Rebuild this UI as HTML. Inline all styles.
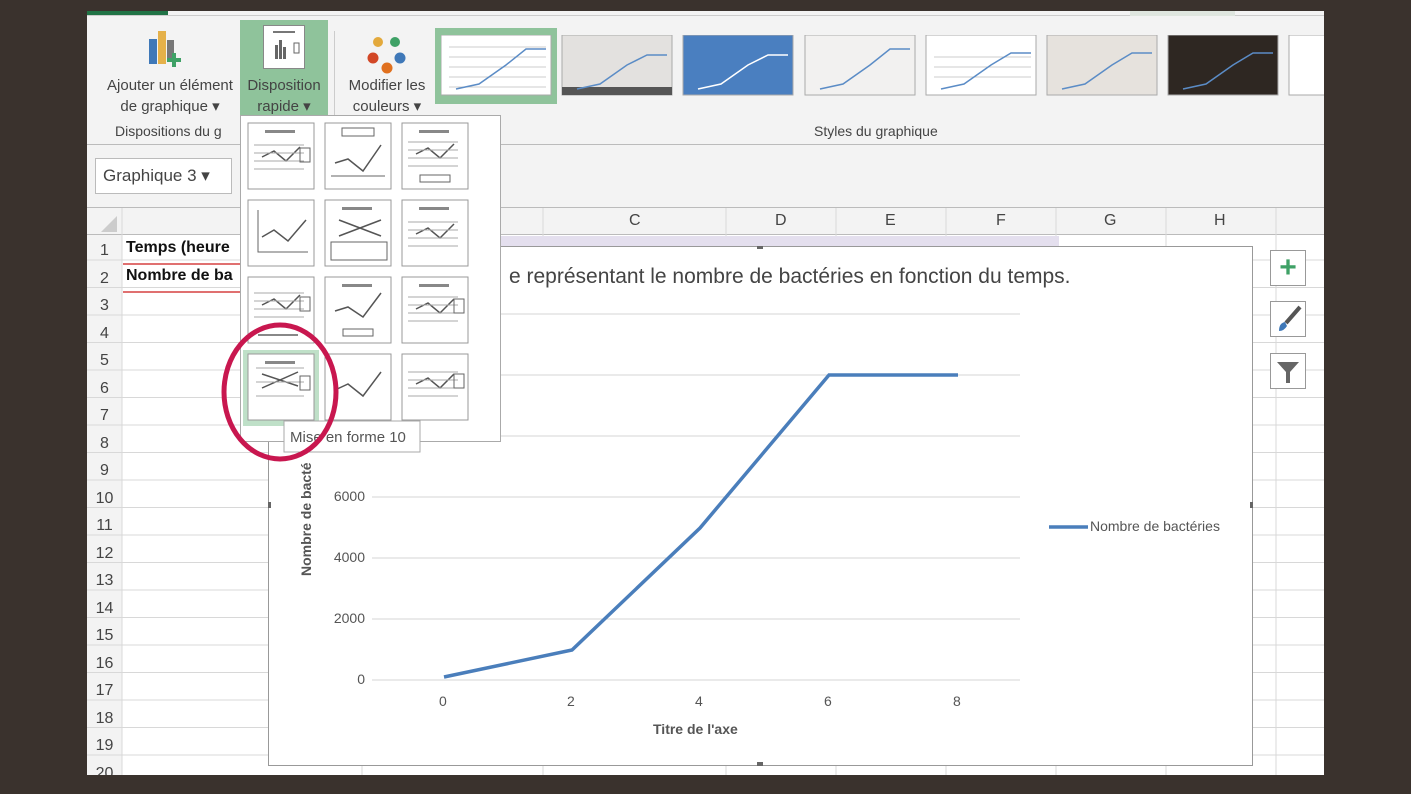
<!DOCTYPE html>
<html><head><meta charset="utf-8"><style>
*{margin:0;padding:0;box-sizing:border-box}
body{width:1411px;height:794px;background:#3a322d;position:relative;overflow:hidden;font-family:"Liberation Sans",sans-serif;color:#333}
.a{position:absolute}
.t{font-size:15px;color:#444;white-space:nowrap}
.yl{position:absolute;left:230px;width:48px;text-align:right;font-size:14px;color:#555}
</style></head><body>
<div class="a" style="left:87px;top:11px;width:1237px;height:764px;background:#f3f3f3;overflow:hidden">
 <div class="a" style="left:0;top:0;width:81px;height:4px;background:#217346"></div>
 <div class="a" style="left:0;top:4px;width:1237px;height:1px;background:#ccc"></div>
 <div class="a" style="left:1043px;top:0;width:105px;height:5px;background:#dfe6df"></div>
 <svg class="a" style="left:58px;top:16px" width="50" height="46"><rect x="4" y="12" width="8" height="25" fill="#3f78b8"/><rect x="13" y="4" width="8" height="33" fill="#e5b14a"/><rect x="22" y="13" width="7" height="20" fill="#777"/><rect x="27" y="26" width="4" height="14" fill="#3fa166"/><rect x="22" y="31" width="14" height="4" fill="#3fa166"/></svg>
 <div class="a t" style="left:8px;top:64px;width:150px;text-align:center;line-height:21px">Ajouter un élément<br>de graphique ▾</div>
 <div class="a" style="left:153px;top:9px;width:88px;height:105px;background:#8fc39b"></div>
 <div class="a" style="left:176px;top:14px;width:42px;height:44px;background:#fff;border:1px solid #888"></div>
 <svg class="a" style="left:176px;top:14px" width="42" height="44"><rect x="10" y="6" width="22" height="2" fill="#777"/><rect x="12" y="20" width="3" height="14" fill="#666"/><rect x="16" y="15" width="3" height="19" fill="#666"/><rect x="20" y="22" width="3" height="12" fill="#666"/><rect x="31" y="18" width="5" height="10" fill="none" stroke="#666"/></svg>
 <div class="a t" style="left:153px;top:64px;width:88px;text-align:center;line-height:21px">Disposition<br>rapide ▾</div>
 <div class="a" style="left:247px;top:20px;width:1px;height:90px;background:#ccc"></div>
 <svg class="a" style="left:275px;top:16px" width="50" height="50"><circle cx="16" cy="15" r="5" fill="#e3a93c"/><circle cx="33" cy="15" r="5" fill="#3fa166"/><circle cx="11" cy="31" r="5.5" fill="#d24726"/><circle cx="38" cy="31" r="5.5" fill="#3f78b8"/><circle cx="25" cy="41" r="5.5" fill="#e0701e"/></svg>
 <div class="a t" style="left:250px;top:64px;width:100px;text-align:center;line-height:21px">Modifier les<br>couleurs ▾</div>
 <div class="a t" style="left:28px;top:112px;font-size:14px">Dispositions du g</div>
 <div class="a t" style="left:727px;top:112px;font-size:14px">Styles du graphique</div>
 <div class="a" style="left:0;top:133px;width:1237px;height:1px;background:#bbb"></div>
 <div class="a" style="left:348px;top:17px;width:122px;height:76px;background:#8fc39b"></div>
 <svg class="a" style="left:354px;top:24px" width="940" height="64">
  <g><rect width="110" height="60" fill="#fff" stroke="#aaa"/><path d="M8 12H105M8 22H105M8 32H105M8 42H105M8 52H105" stroke="#ccc"/><path d="M15 54L38 49L65 30L85 14H105" stroke="#5b8cc6" stroke-width="1.5" fill="none"/></g>
  <g transform="translate(121,0)"><rect width="110" height="60" fill="#e3e1df" stroke="#aaa"/><rect y="52" width="110" height="8" fill="#555"/><path d="M15 54L38 49L65 30L85 20H105" stroke="#5b8cc6" stroke-width="1.5" fill="none"/></g>
  <g transform="translate(242,0)"><rect width="110" height="60" fill="#4a7fc0" stroke="#aaa"/><path d="M15 54L38 49L65 30L85 20H105" stroke="#fff" stroke-width="1.5" fill="none"/></g>
  <g transform="translate(364,0)"><rect width="110" height="60" fill="#f2f1f0" stroke="#aaa"/><path d="M15 54L38 49L65 30L85 14H105" stroke="#5b8cc6" stroke-width="1.5" fill="none"/></g>
  <g transform="translate(485,0)"><rect width="110" height="60" fill="#fff" stroke="#aaa"/><path d="M8 22H105M8 32H105M8 42H105" stroke="#ccc"/><path d="M15 54L38 49L65 30L85 18H105" stroke="#5b8cc6" stroke-width="1.5" fill="none"/></g>
  <g transform="translate(606,0)"><rect width="110" height="60" fill="#e6e2dd" stroke="#aaa"/><path d="M15 54L38 49L65 30L85 18H105" stroke="#5b8cc6" stroke-width="1.5" fill="none"/></g>
  <g transform="translate(727,0)"><rect width="110" height="60" fill="#2e2722" stroke="#aaa"/><path d="M15 54L38 49L65 30L85 18H105" stroke="#5b8cc6" stroke-width="1.5" fill="none"/></g>
  <g transform="translate(848,0)"><rect width="110" height="60" fill="#fff" stroke="#aaa"/></g>
 </svg>
 <div class="a" style="left:8px;top:147px;width:137px;height:36px;background:#fff;border:1px solid #bbb"></div>
 <div class="a t" style="left:16px;top:155px;font-size:17px">Graphique 3 ▾</div>
 <div class="a" style="left:0;top:196px;width:1237px;height:1px;background:#bbb"></div>
 <div class="a" style="left:0;top:197px;width:1237px;height:567px;background:#fff"></div>
 <div class="a" style="left:0;top:197px;width:35px;height:567px;background:#f3f3f3"></div>
 <div class="a" style="left:0;top:197px;width:1237px;height:27px;background:#f3f3f3;border-bottom:1px solid #bbb"></div>
 <svg class="a" style="left:0;top:197px" width="1237" height="567">
  <g stroke="#d8d8d8">
   <path d="M35 0V567M275 0V567M456 0V567M639 0V567M749 0V567M859 0V567M969 0V567M1079 0V567M1189 0V567"/>
   <path d="M0 52H1237M0 79.5H1237M0 107H1237M0 134.5H1237M0 162H1237M0 189.5H1237M0 217H1237M0 244.5H1237M0 272H1237M0 299.5H1237M0 327H1237M0 354.5H1237M0 382H1237M0 409.5H1237M0 437H1237M0 464.5H1237M0 492H1237M0 519.5H1237M0 547H1237"/>
  </g>
  <path d="M30 8L30 24L14 24Z" fill="#ccc"/>
  <rect x="400" y="28" width="572" height="10" fill="#e4dfee"/>
 </svg>
 <div class="a" style="left:0;top:197px;width:1237px;height:27px;font-size:16px;color:#444">
  <span class="a" style="left:542px;top:4px">C</span><span class="a" style="left:688px;top:4px">D</span><span class="a" style="left:798px;top:4px">E</span><span class="a" style="left:909px;top:4px">F</span><span class="a" style="left:1017px;top:4px">G</span><span class="a" style="left:1127px;top:4px">H</span>
 </div>
 <div class="a" style="left:0;top:226px;width:35px;font-size:16px;color:#444;line-height:27.5px;text-align:center">1<br>2<br>3<br>4<br>5<br>6<br>7<br>8<br>9<br>10<br>11<br>12<br>13<br>14<br>15<br>16<br>17<br>18<br>19<br>20</div>
 <div class="a" style="left:39px;top:228px;font-size:16px;font-weight:bold;color:#111">Temps (heure</div>
 <div class="a" style="left:39px;top:256px;font-size:16px;font-weight:bold;color:#111">Nombre de ba</div>
 <div class="a" style="left:36px;top:252px;width:120px;height:2px;background:#e07070"></div>
 <div class="a" style="left:36px;top:280px;width:120px;height:2px;background:#e07070"></div>
 <div class="a" style="left:181px;top:235px;width:985px;height:520px;background:#fff;border:1px solid #999"></div>
 <svg class="a" style="left:181px;top:235px" width="985" height="520">
  <g stroke="#d4d4d4"><path d="M104 434H752M104 373H752M104 312H752M104 251H752M104 190H752M104 129H752M104 68H752"/></g>
  <path d="M176 431L304 404L432 282L561 129H690" stroke="#4a7ebb" stroke-width="3.5" fill="none"/>
  <path d="M781 281H820" stroke="#4a7ebb" stroke-width="3.5"/>
  <g fill="#666"><rect x="-3" y="256" width="6" height="6"/><rect x="982" y="256" width="6" height="6"/><rect x="489" y="-3" width="6" height="6"/><rect x="489" y="516" width="6" height="6"/></g>
 </svg>
 <div class="a" style="left:422px;top:254px;font-size:21px;color:#444;white-space:nowrap">e représentant le nombre de bactéries en fonction du temps.</div>
 <div class="yl" style="top:477px">6000</div>
 <div class="yl" style="top:538px">4000</div>
 <div class="yl" style="top:599px">2000</div>
 <div class="yl" style="top:660px">0</div>
 <div class="a" style="left:352px;top:682px;font-size:14px;color:#555"><span class="a" style="left:0">0</span><span class="a" style="left:128px">2</span><span class="a" style="left:256px">4</span><span class="a" style="left:385px">6</span><span class="a" style="left:514px">8</span></div>
 <div class="a" style="left:566px;top:710px;font-size:14px;color:#555;font-weight:bold;white-space:nowrap">Titre de l'axe</div>
 <div class="a" style="left:211px;top:565px;font-size:14px;color:#555;font-weight:bold;transform:rotate(-90deg);transform-origin:0 0;white-space:nowrap">Nombre de bacté</div>
 <div class="a" style="left:1003px;top:507px;font-size:14px;color:#555;white-space:nowrap">Nombre de bactéries</div>
 <div class="a" style="left:1183px;top:239px;width:36px;height:36px;background:#fff;border:1px solid #999;color:#3fa166;font-size:30px;font-weight:bold;text-align:center;line-height:34px">+</div>
 <div class="a" style="left:1183px;top:290px;width:36px;height:36px;background:#fff;border:1px solid #999"><svg width="34" height="34"><path d="M29 5L15 21" stroke="#555" stroke-width="4"/><path d="M8 29Q8 21 14 20L16 24Q13 29 8 29Z" fill="#3f78b8"/></svg></div>
 <div class="a" style="left:1183px;top:342px;width:36px;height:36px;background:#fff;border:1px solid #999"><svg width="34" height="34"><path d="M6 8H28L19 18V29H15V18Z" fill="#666"/></svg></div>
</div>
<div class="a" style="left:240px;top:115px;width:261px;height:327px;background:#fff;border:1px solid #aaa"></div>
<div class="a" style="left:243px;top:350px;width:76px;height:76px;background:#bfe0c8"></div>
<svg class="a" style="left:0;top:0" width="1411" height="794">
 <defs><g id="c"><path d="M14 16L26 10L38 20L52 6" stroke="#555" stroke-width="1.5" fill="none"/><path d="M6 4H56M6 12H56M6 20H56M6 28H56" stroke="#aaa"/></g></defs>
 <g fill="none">
 <g transform="translate(248,123)"><rect width="66" height="66" fill="#fff" stroke="#999"/><rect x="17" y="7" width="30" height="3" fill="#888"/><use href="#c" x="0" y="18"/><rect x="52" y="25" width="10" height="14" stroke="#666"/></g>
 <g transform="translate(325,123)"><rect width="66" height="66" fill="#fff" stroke="#999"/><rect x="17" y="5" width="32" height="8" stroke="#666"/><path d="M10 40L23 36L38 48L56 22" stroke="#555" stroke-width="1.5"/><path d="M6 53H60" stroke="#666"/></g>
 <g transform="translate(402,123)"><rect width="66" height="66" fill="#fff" stroke="#999"/><rect x="17" y="7" width="30" height="3" fill="#888"/><use href="#c" x="0" y="15"/><rect x="18" y="52" width="30" height="7" stroke="#666"/></g>
 <g transform="translate(248,200)"><rect width="66" height="66" fill="#fff" stroke="#999"/><path d="M10 10V52H60" stroke="#666"/><path d="M14 37L26 30L40 41L58 20" stroke="#555" stroke-width="1.5"/></g>
 <g transform="translate(325,200)"><rect width="66" height="66" fill="#fff" stroke="#999"/><rect x="17" y="7" width="30" height="3" fill="#888"/><path d="M14 20L56 36M14 36L56 20" stroke="#555" stroke-width="1.5"/><rect x="6" y="42" width="56" height="18" stroke="#666"/></g>
 <g transform="translate(402,200)"><rect width="66" height="66" fill="#fff" stroke="#999"/><rect x="17" y="7" width="30" height="3" fill="#888"/><use href="#c" x="0" y="18"/></g>
 <g transform="translate(248,277)"><rect width="66" height="66" fill="#fff" stroke="#999"/><use href="#c" x="0" y="12"/><rect x="52" y="20" width="10" height="14" stroke="#666"/><rect x="10" y="57" width="40" height="2" fill="#888"/></g>
 <g transform="translate(325,277)"><rect width="66" height="66" fill="#fff" stroke="#999"/><rect x="17" y="7" width="30" height="3" fill="#888"/><path d="M10 34L23 30L38 40L56 16" stroke="#555" stroke-width="1.5"/><rect x="18" y="52" width="30" height="7" stroke="#666"/></g>
 <g transform="translate(402,277)"><rect width="66" height="66" fill="#fff" stroke="#999"/><rect x="17" y="7" width="30" height="3" fill="#888"/><use href="#c" x="0" y="16"/><rect x="52" y="22" width="10" height="14" stroke="#666"/></g>
 <g transform="translate(248,354)"><rect width="66" height="66" fill="#fff" stroke="#999"/><rect x="17" y="7" width="30" height="3" fill="#888"/><path d="M14 34L50 18M14 20L50 32" stroke="#555" stroke-width="1.5"/><path d="M8 14H56M8 28H56M8 42H56" stroke="#aaa"/><rect x="52" y="22" width="10" height="14" stroke="#666"/></g>
 <g transform="translate(325,354)"><rect width="66" height="66" fill="#fff" stroke="#999"/><path d="M10 36L23 30L38 42L56 18" stroke="#555" stroke-width="1.5"/></g>
 <g transform="translate(402,354)"><rect width="66" height="66" fill="#fff" stroke="#999"/><use href="#c" x="0" y="14"/><rect x="52" y="20" width="10" height="14" stroke="#666"/></g>
 </g>
 <rect x="284" y="421" width="136" height="31" fill="#fff" stroke="#aaa"/>
 <text x="290" y="442" font-family="Liberation Sans" font-size="15" fill="#555">Mise en forme 10</text>
 <ellipse cx="280" cy="392" rx="56" ry="67" fill="none" stroke="#c8174f" stroke-width="5"/>
</svg>
</body></html>
